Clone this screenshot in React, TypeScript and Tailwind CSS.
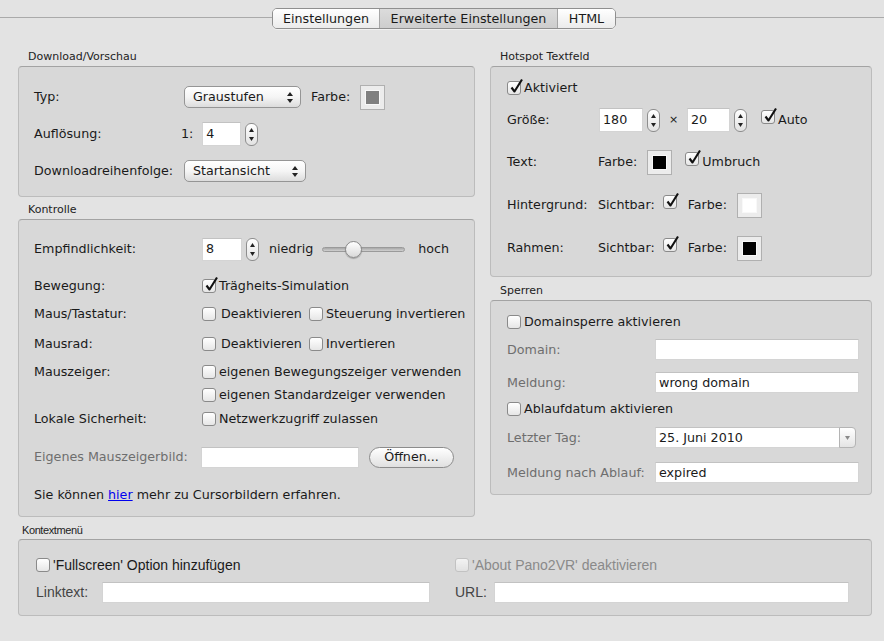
import React from "react";

function Check({ checked = false, disabled = false }: { checked?: boolean; disabled?: boolean }) {
  return (
    <span
      className={`relative inline-block w-[14px] h-[14px] shrink-0 rounded-[3px] border bg-gradient-to-b from-white to-[#e6e6e6] ${
        disabled ? "border-[#b9b9b9] opacity-70" : "border-[#8a8a8a]"
      }`}
    >
      {checked && (
        <svg className="absolute left-[1px] top-[-4px]" width="15" height="16" viewBox="0 0 15 16">
          <path d="M2.5 9.5 L5.5 13.5 L13 1.5" stroke="#111" strokeWidth="2.1" fill="none" strokeLinejoin="round" />
        </svg>
      )}
    </span>
  );
}

function Stepper() {
  return (
    <span className="flex flex-col items-center justify-center gap-[5px] w-[13px] h-[23px] rounded-[6px] border border-[#8e8e8e] bg-gradient-to-b from-white to-[#e2e2e2]">
      <svg width="5" height="4" viewBox="0 0 5 4">
        <path d="M2.5 0 L5 4 L0 4Z" fill="#222" />
      </svg>
      <svg width="5" height="4" viewBox="0 0 5 4">
        <path d="M0 0 L5 0 L2.5 4Z" fill="#222" />
      </svg>
    </span>
  );
}

function PopUp({ label, className }: { label: string; className: string }) {
  return (
    <div
      className={`flex items-center justify-between h-[22px] rounded-[5px] border border-[#959595] bg-gradient-to-b from-white via-[#f5f5f5] to-[#dcdcdc] pl-[8px] pr-[7px] ${className}`}
    >
      <span>{label}</span>
      <span className="flex flex-col items-center gap-[3px]">
        <svg width="6" height="4" viewBox="0 0 6 4">
          <path d="M3 0 L6 4 L0 4Z" fill="#222" />
        </svg>
        <svg width="6" height="4" viewBox="0 0 6 4">
          <path d="M0 0 L6 0 L3 4Z" fill="#222" />
        </svg>
      </span>
    </div>
  );
}

function Well({ swatch }: { swatch: string }) {
  return (
    <span className="flex items-center justify-center w-[25px] h-[25px] border border-[#b0b0b0] bg-[#ececec]">
      <span className={`w-[15px] h-[15px] border border-[#f8f8f8] ${swatch}`} />
    </span>
  );
}

function Field({ value = "", className }: { value?: string; className: string }) {
  return (
    <div className={`flex items-center bg-white border border-[#d4d4d4] border-t-[#c2c2c2] px-[3px] ${className}`}>
      {value}
    </div>
  );
}

function Group({
  title,
  boxClass,
  titleClass = "pl-[10px]",
  children,
}: {
  title: string;
  boxClass: string;
  titleClass?: string;
  children: React.ReactNode;
}) {
  return (
    <div className="flex flex-col">
      <div className={`h-[16px] text-[11px] leading-[14px] text-[#222] ${titleClass}`}>{title}</div>
      <div className={`rounded-[4px] border border-[#bcbcbc] border-t-[#a3a3a3] bg-[#d8d8d8] ${boxClass}`}>{children}</div>
    </div>
  );
}

export default function App() {
  return (
    <div className="w-[884px] h-[641px] bg-[#e3e3e3] text-[12.7px] text-[#1a1a1a] font-['DejaVu_Sans','Liberation_Sans',sans-serif] overflow-hidden">
      {/* Tabs */}
      <div className="relative h-[50px]">
        <div className="absolute left-0 right-0 top-[17px] h-px bg-[#aaaaaa]" />
        <div className="relative flex pl-[272px] pt-[8px]">
          <div className="flex h-[21px] rounded-[5px] border border-[#8f8f8f] overflow-hidden shadow-[0_1px_0_rgba(255,255,255,0.5)]">
            <div className="w-[107px] flex items-center justify-center bg-gradient-to-b from-white to-[#ebebeb] border-r border-[#a5a5a5]">
              Einstellungen
            </div>
            <div className="w-[178px] flex items-center justify-center bg-gradient-to-b from-[#dcdcdc] to-[#cdcdcd] border-r border-[#a5a5a5]">
              Erweiterte Einstellungen
            </div>
            <div className="w-[57px] flex items-center justify-center bg-gradient-to-b from-white to-[#ebebeb]">HTML</div>
          </div>
        </div>
      </div>

      <div className="flex gap-[15px] pl-[18px]">
        {/* Left column */}
        <div className="w-[457px] flex flex-col">
          <Group title="Download/Vorschau" boxClass="h-[131px] pl-[15px] pt-[17px]">
            <div className="flex items-center h-[26px]">
              <span className="w-[147px]">Typ:</span>
              <PopUp label="Graustufen" className="ml-[3px] w-[117px]" />
              <span className="ml-[10px]">Farbe:</span>
              <span className="ml-[10px]">
                <Well swatch="bg-[#808080]" />
              </span>
            </div>
            <div className="flex items-center h-[26px] mt-[11px]">
              <span className="w-[147px]">Auflösung:</span>
              <span>1:</span>
              <Field value="4" className="ml-[9px] w-[39px] h-[24px]" />
              <span className="ml-[4px]">
                <Stepper />
              </span>
            </div>
            <div className="flex items-center h-[26px] mt-[11px]">
              <span className="w-[147px]">Downloadreihenfolge:</span>
              <PopUp label="Startansicht" className="ml-[3px] w-[122px]" />
            </div>
          </Group>

          <div className="mt-[6px]">
            <Group title="Kontrolle" boxClass="h-[298px] pl-[15px] pt-[17px]">
              <div className="flex items-center h-[24px]">
                <span className="w-[168px]">Empfindlichkeit:</span>
                <Field value="8" className="w-[40px] h-[23px]" />
                <span className="ml-[4px]">
                  <Stepper />
                </span>
                <span className="ml-[10px]">niedrig</span>
                <span className="relative ml-[9px] w-[83px] h-[17px] flex items-center">
                  <span className="w-full h-[5px] rounded-full border border-[#9a9a9a] bg-gradient-to-b from-[#a8a8a8] to-[#d0d0d0]" />
                  <span className="absolute left-[23px] top-0 w-[17px] h-[17px] rounded-full border border-[#8a8a8a] bg-gradient-to-b from-white to-[#d9d9d9] shadow-[0_1px_1px_rgba(0,0,0,0.25)]" />
                </span>
                <span className="ml-[13px]">hoch</span>
              </div>
              <div className="flex items-center h-[20px] mt-[15px]">
                <span className="w-[168px]">Bewegung:</span>
                <Check checked />
                <span className="ml-[3px]">Trägheits-Simulation</span>
              </div>
              <div className="flex items-center h-[20px] mt-[8px]">
                <span className="w-[168px]">Maus/Tastatur:</span>
                <span className="flex items-center w-[107px]">
                  <Check />
                  <span className="ml-[5px]">Deaktivieren</span>
                </span>
                <Check />
                <span className="ml-[3px]">Steuerung invertieren</span>
              </div>
              <div className="flex items-center h-[20px] mt-[10px]">
                <span className="w-[168px]">Mausrad:</span>
                <span className="flex items-center w-[107px]">
                  <Check />
                  <span className="ml-[5px]">Deaktivieren</span>
                </span>
                <Check />
                <span className="ml-[3px]">Invertieren</span>
              </div>
              <div className="flex items-center h-[20px] mt-[8px]">
                <span className="w-[168px]">Mauszeiger:</span>
                <Check />
                <span className="ml-[3px]">eigenen Bewegungszeiger verwenden</span>
              </div>
              <div className="flex items-center h-[20px] mt-[3px]">
                <span className="w-[168px]" />
                <Check />
                <span className="ml-[3px]">eigenen Standardzeiger verwenden</span>
              </div>
              <div className="flex items-center h-[20px] mt-[4px]">
                <span className="w-[168px]">Lokale Sicherheit:</span>
                <Check />
                <span className="ml-[3px]">Netzwerkzugriff zulassen</span>
              </div>
              <div className="flex items-center h-[22px] mt-[17px]">
                <span className="w-[167px] text-[#6e6e6e]">Eigenes Mauszeigerbild:</span>
                <Field className="w-[158px] h-[21px]" />
                <div className="ml-[10px] w-[85px] h-[21px] flex items-center justify-center rounded-full border border-[#8c8c8c] bg-gradient-to-b from-white to-[#e0e0e0]">
                  Öffnen...
                </div>
              </div>
              <div className="flex items-center h-[20px] mt-[17px]">
                <span>
                  Sie können <span className="text-[#0000ee] underline">hier</span> mehr zu Cursorbildern erfahren.
                </span>
              </div>
            </Group>
          </div>
        </div>

        {/* Right column */}
        <div className="w-[382px] flex flex-col">
          <Group title="Hotspot Textfeld" boxClass="h-[211px] pl-[16px] pt-[11px]">
            <div className="flex items-center h-[20px]">
              <Check checked />
              <span className="ml-[3px]">Aktiviert</span>
            </div>
            <div className="flex items-center h-[24px] mt-[10px]">
              <span className="w-[92px]">Größe:</span>
              <Field value="180" className="w-[44px] h-[24px]" />
              <span className="ml-[4px]">
                <Stepper />
              </span>
              <span className="ml-[9px] w-[9px] text-[11px]">×</span>
              <Field value="20" className="ml-[9px] w-[43px] h-[24px]" />
              <span className="ml-[4px]">
                <Stepper />
              </span>
              <span className="ml-[14px]">
                <Check checked />
              </span>
              <span className="ml-[3px]">Auto</span>
            </div>
            <div className="flex items-center h-[26px] mt-[17px]">
              <span className="w-[91px]">Text:</span>
              <span>Farbe:</span>
              <span className="ml-[10px]">
                <Well swatch="bg-black" />
              </span>
              <span className="ml-[13px]">
                <Check checked />
              </span>
              <span className="ml-[3px]">Umbruch</span>
            </div>
            <div className="flex items-center h-[26px] mt-[17px]">
              <span className="w-[91px]">Hintergrund:</span>
              <span>Sichtbar:</span>
              <span className="ml-[8px]">
                <Check checked />
              </span>
              <span className="ml-[11px]">Farbe:</span>
              <span className="ml-[10px]">
                <Well swatch="bg-white" />
              </span>
            </div>
            <div className="flex items-center h-[26px] mt-[17px]">
              <span className="w-[91px]">Rahmen:</span>
              <span>Sichtbar:</span>
              <span className="ml-[8px]">
                <Check checked />
              </span>
              <span className="ml-[11px]">Farbe:</span>
              <span className="ml-[10px]">
                <Well swatch="bg-black" />
              </span>
            </div>
          </Group>

          <div className="mt-[7px]">
            <Group title="Sperren" boxClass="h-[195px] pl-[16px] pt-[11px]">
              <div className="flex items-center h-[20px]">
                <Check />
                <span className="ml-[3px]">Domainsperre aktivieren</span>
              </div>
              <div className="flex items-center h-[21px] mt-[7px]">
                <span className="w-[148px] text-[#6e6e6e]">Domain:</span>
                <Field className="w-[204px] h-[21px]" />
              </div>
              <div className="flex items-center h-[21px] mt-[12px]">
                <span className="w-[148px] text-[#6e6e6e]">Meldung:</span>
                <Field value="wrong domain" className="w-[204px] h-[21px]" />
              </div>
              <div className="flex items-center h-[20px] mt-[6px]">
                <Check />
                <span className="ml-[3px]">Ablaufdatum aktivieren</span>
              </div>
              <div className="flex items-center h-[21px] mt-[8px]">
                <span className="w-[148px] text-[#6e6e6e]">Letzter Tag:</span>
                <div className="flex w-[201px] h-[21px]">
                  <Field value="25. Juni 2010" className="flex-1 h-[21px] border-r-0" />
                  <div className="w-[17px] h-[21px] flex items-center justify-center rounded-r-[4px] border border-[#b4b4b4] bg-gradient-to-b from-white to-[#e4e4e4]">
                    <svg width="5" height="4" viewBox="0 0 5 4">
                      <path d="M0 0 L5 0 L2.5 4Z" fill="#8a8a8a" />
                    </svg>
                  </div>
                </div>
              </div>
              <div className="flex items-center h-[21px] mt-[14px]">
                <span className="w-[148px] text-[#6e6e6e]">Meldung nach Ablauf:</span>
                <Field value="expired" className="w-[204px] h-[21px]" />
              </div>
            </Group>
          </div>
        </div>
      </div>

      {/* Kontextmenü */}
      <div className="pl-[18px] w-[872px] mt-[6px] font-['Liberation_Sans',sans-serif]">
        <Group title="Kontextmenü" titleClass="pl-[4px] tracking-[-0.4px]" boxClass="h-[77px] pl-[17px] pt-[15px] text-[14px]">
          <div className="flex items-center h-[20px]">
            <span className="flex items-center w-[419px]">
              <Check />
              <span className="ml-[3px]">'Fullscreen' Option hinzufügen</span>
            </span>
            <Check disabled />
            <span className="ml-[3px] text-[#8a8a8a]">'About Pano2VR' deaktivieren</span>
          </div>
          <div className="flex items-center h-[21px] mt-[7px]">
            <span className="w-[66px] text-[#444]">Linktext:</span>
            <Field className="w-[328px] h-[21px]" />
            <span className="ml-[25px] w-[39px] text-[#444]">URL:</span>
            <Field className="w-[355px] h-[21px]" />
          </div>
        </Group>
      </div>
    </div>
  );
}
